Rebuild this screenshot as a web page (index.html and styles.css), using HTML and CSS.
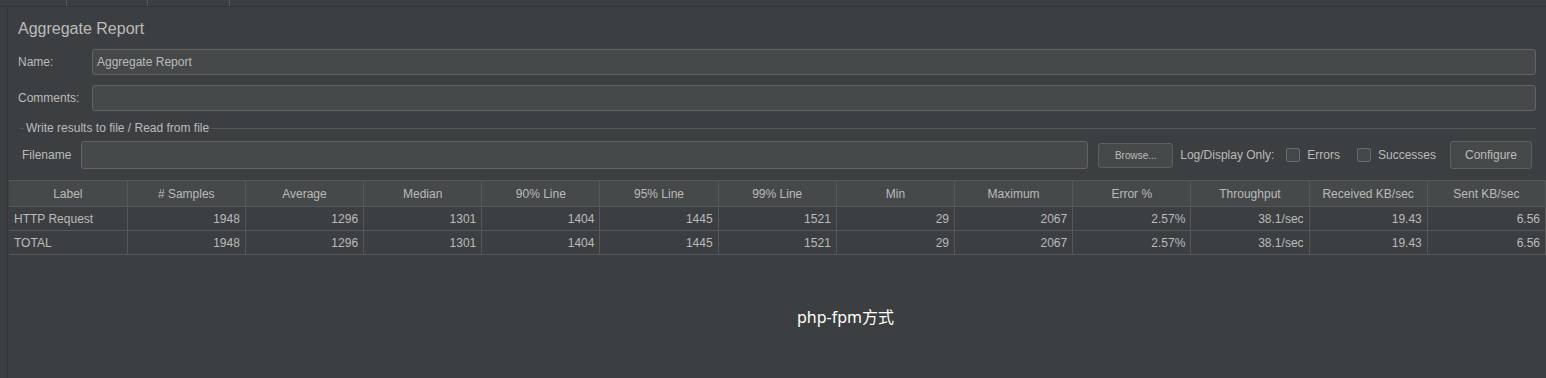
FILE: index.html
```
<!DOCTYPE html>
<html lang="en">
<head>
  <meta charset="UTF-8">
  <title>Aggregate Report</title>
  <link rel="stylesheet" href="styles.css">
</head>
<body>
  <div class="tabs">
    <span class="tab t1"></span>
    <span class="tab t2"></span>
    <span class="tab t3"></span>
  </div>

  <div class="main">
    <div class="side"></div>
    <div class="panel">
      <h1 class="title">Aggregate Report</h1>

      <div class="row">
        <label class="lbl">Name:</label>
        <div class="field">Aggregate Report</div>
      </div>
      <div class="row">
        <label class="lbl">Comments:</label>
        <div class="field"></div>
      </div>

      <div class="group">
        <div class="legend"><span>Write results to file / Read from file</span></div>
        <div class="file-row">
          <label class="lbl-file">Filename</label>
          <div class="field tall"></div>
          <button class="btn small">Browse...</button>
          <span class="only">Log/Display Only:</span>
          <span class="check"><i></i>Errors</span>
          <span class="check last"><i></i>Successes</span>
          <button class="btn">Configure</button>
        </div>
      </div>

      <table class="report">
        <thead>
          <tr>
            <th>Label</th><th># Samples</th><th>Average</th><th>Median</th><th>90% Line</th>
            <th>95% Line</th><th>99% Line</th><th>Min</th><th>Maximum</th><th>Error %</th>
            <th>Throughput</th><th>Received KB/sec</th><th>Sent KB/sec</th>
          </tr>
        </thead>
        <tbody>
          <tr>
            <td>HTTP Request</td><td>1948</td><td>1296</td><td>1301</td><td>1404</td>
            <td>1445</td><td>1521</td><td>29</td><td>2067</td><td>2.57%</td>
            <td>38.1/sec</td><td>19.43</td><td>6.56</td>
          </tr>
          <tr>
            <td>TOTAL</td><td>1948</td><td>1296</td><td>1301</td><td>1404</td>
            <td>1445</td><td>1521</td><td>29</td><td>2067</td><td>2.57%</td>
            <td>38.1/sec</td><td>19.43</td><td>6.56</td>
          </tr>
        </tbody>
      </table>

      <p class="caption">php-fpm方式</p>
    </div>
  </div>
</body>
</html>
```

FILE: styles.css
```
body {
  margin: 0;
  background: #3c3f41;
  color: #bbbbbb;
  font-family: "Liberation Sans", Arial, "Noto Sans CJK SC", sans-serif;
  font-size: 12px;
  overflow: hidden;
}
.tabs {
  height: 6px;
  border-bottom: 1px solid #323436;
  display: flex;
}
.tab {
  border-right: 1px solid #55585a;
}
.t1 { width: 66px; }
.t2 { width: 80px; }
.t3 { width: 81px; }
.main {
  display: flex;
  min-height: calc(100vh - 7px);
}
.side {
  width: 7px;
  border-right: 1px solid #313335;
  flex: none;
}
.panel {
  flex: 1;
  padding: 12px 0 0 1px;
  min-width: 0;
}
.title {
  font-size: 16px;
  font-weight: normal;
  margin: 0 0 10px 9px;
  line-height: 20px;
  color: #bbbbbb;
}
.row {
  display: flex;
  align-items: center;
  margin: 0 10px 10px 9px;
}
.lbl {
  width: 74px;
  flex: none;
}
.field {
  flex: 1;
  height: 24px;
  line-height: 24px;
  border: 1px solid #646464;
  border-radius: 3px;
  background: #45494a;
  padding: 0 4px;
  color: #bbbbbb;
}
.group {
  margin: 0 14px 0 11px;
}
.legend {
  position: relative;
  height: 14px;
  line-height: 14px;
}
.legend::before {
  content: "";
  position: absolute;
  left: 0;
  right: -4px;
  top: 7px;
  border-top: 1px solid #55585a;
}
.legend span {
  position: relative;
  background: #3c3f41;
  margin-left: 4px;
  padding: 0 2px;
}
.file-row {
  display: flex;
  align-items: center;
  margin-top: 6px;
  padding-left: 2px;
}
.lbl-file {
  width: 59px;
  flex: none;
}
.field.tall {
  height: 26px;
  margin-right: 10px;
}
.btn {
  background: #45494a;
  border: 1px solid #5e6060;
  border-radius: 3px;
  color: #bbbbbb;
  font-family: inherit;
  font-size: 12px;
  height: 28px;
  width: 82px;
  padding: 0;
  flex: none;
}
.btn.small {
  font-size: 10px;
  height: 25px;
  width: 75px;
  margin-right: 7px;
}
.only {
  margin-right: 12px;
  flex: none;
}
.check {
  display: flex;
  align-items: center;
  margin-right: 17px;
  flex: none;
}
.check.last {
  margin-right: 14px;
}
.check i {
  width: 12px;
  height: 12px;
  border: 1px solid #6b6b6b;
  border-radius: 2px;
  background: #43494a;
  margin-right: 7px;
}
.report {
  border-collapse: collapse;
  table-layout: fixed;
  width: 100%;
  margin-top: 11px;
}
.report th,
.report td {
  border: 1px solid #55585a;
  height: 23px;
  padding: 0 5px;
  white-space: nowrap;
  overflow: hidden;
  font-weight: normal;
}
.report th {
  background: #45494a;
  height: 25px;
  text-align: center;
}
.report td {
  text-align: right;
}
.report td:first-child {
  text-align: left;
}
.report tr > :first-child {
  border-left: none;
}
.caption {
  color: #ffffff;
  font-family: "Noto Sans", "Noto Sans CJK SC", sans-serif;
  font-size: 16px;
  margin: 49px 0 0 788px;
}
```
